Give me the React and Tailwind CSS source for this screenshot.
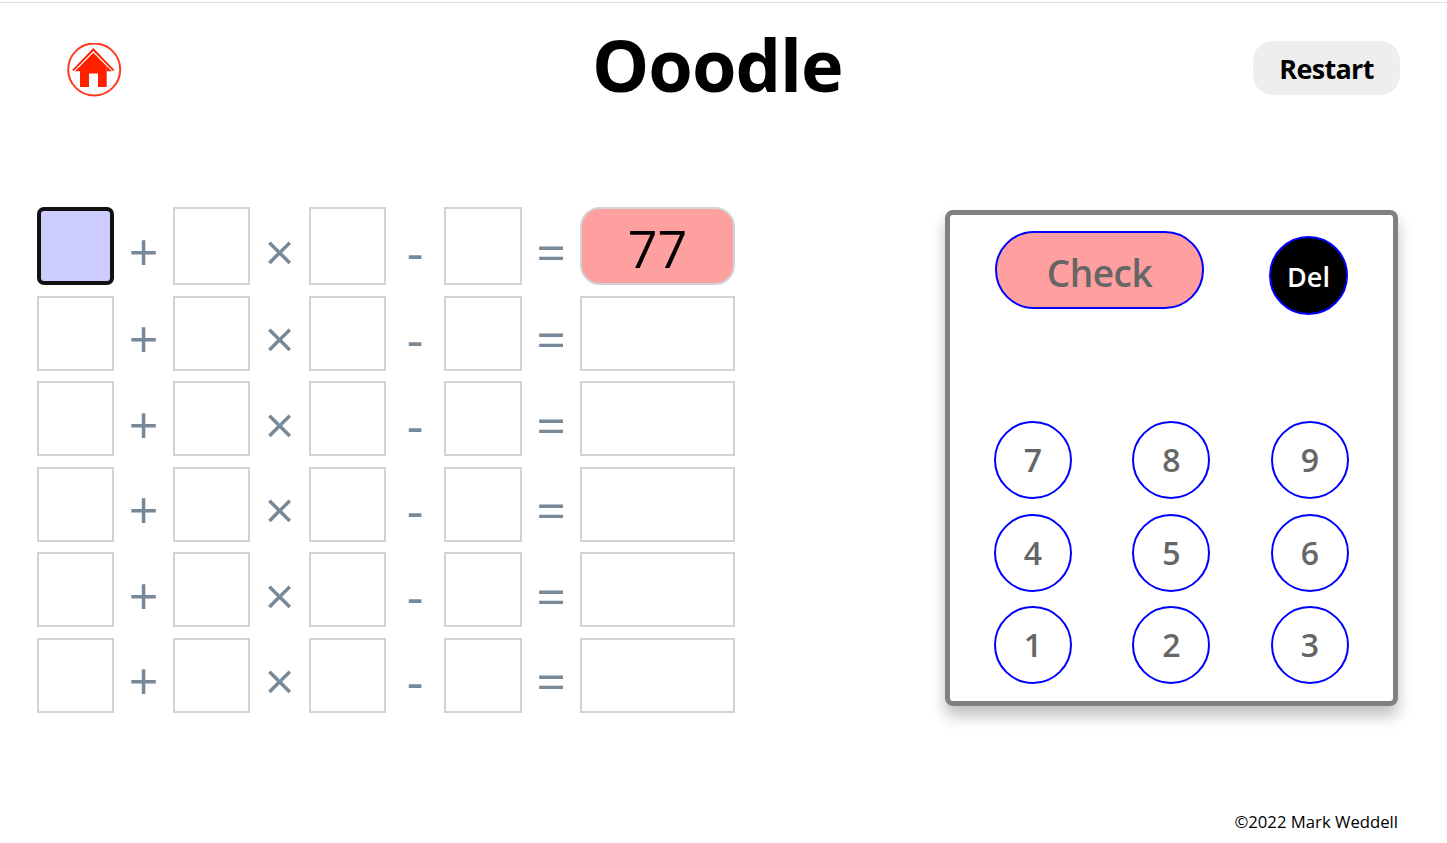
const rows = [0, 1, 2, 3, 4, 5];

const Cell = ({ active }) => (
  <div className={active ? 'border-4 border-[#111] rounded-[7px] bg-[#ccccff]' : 'border-2 border-[#d3d3d3]'} />
);

const Op = ({ children }) => (
  <div className="flex items-center justify-center pt-[10px] text-[52px] font-medium leading-none text-[#778899]">{children}</div>
);

const HomeIcon = () => (
  <svg width="55" height="55" viewBox="0 0 55 55" className="mt-[5px] shrink-0">
    <circle cx="27.2" cy="26.5" r="26" fill="none" stroke="#ff3b1f" strokeWidth="2" />
    <path d="M26.3 5 L47.5 27 L46 28 L26.3 8 L6.7 28 L5.2 27 Z" fill="#ff2000" />
    <path d="M26.3 9.7 L13 23.2 V44 H22 V30.5 H31 V44 H39.7 V23.2 Z" fill="#ff2000" />
    <path d="M13 23.2 L7.8 28.2 H13 Z M39.7 23.2 L45 28.2 H39.7 Z" fill="#ff2000" />
  </svg>
);

const NumKey = ({ n }) => (
  <button className="flex h-[78px] w-[78px] items-center justify-center rounded-full border-2 border-[#0000ff] text-[32px] font-semibold text-[#666]">
    {n}
  </button>
);

export default function App() {
  return (
    <div className="h-[843px] overflow-hidden bg-white font-['Open_Sans',sans-serif] text-black">
      <div className="mt-[2px] border-t border-[#ddd]" />

      <header className="flex h-[130px] items-center">
        <div className="ml-[67px]"><HomeIcon /></div>
        <h1 className="-mt-[8px] ml-[470px] text-[72px] font-bold leading-none tracking-[-1px]">Ooodle</h1>
        <button className="ml-auto mr-[47px] h-[54px] w-[147px] rounded-[20px] bg-[#eee] pt-[2px] text-[27px] font-bold tracking-[-0.7px]">Restart</button>
      </header>

      <main className="mt-[74px] flex items-start pl-[37px]">
        <div className="grid grid-cols-[77px_59px_77px_59px_77px_58px_78px_58px_155px] grid-rows-[78px_75px_75px_75px_75px_75px] gap-y-[10.5px]">
          {rows.map((r) => (
            <div key={r} className="contents">
              <Cell active={r === 0} />
              <Op>+</Op>
              <Cell />
              <Op>×</Op>
              <Cell />
              <Op>-</Op>
              <Cell />
              <Op>=</Op>
              {r === 0 ? (
                <div className="flex items-center justify-center rounded-[20px] border-2 border-[#d3d3d3] bg-[#ffa0a0] pt-[4px] text-[52px] leading-none">77</div>
              ) : (
                <div className="border-2 border-[#d3d3d3]" />
              )}
            </div>
          ))}
        </div>

        <section className="ml-auto mr-[49px] mt-[3px] h-[496px] w-[453px] rounded-[8px] border-[5px] border-[#808080] bg-white pl-[44px] pt-[16px] shadow-[0_10px_15px_rgba(0,0,0,0.25)]">
          <div className="flex items-start">
            <button className="ml-[1px] h-[78px] w-[209px] rounded-[39px] border-2 border-[#0000ff] bg-[#ff9f9f] pt-[5px] text-[37px] font-semibold tracking-[-0.5px] text-[#666]">Check</button>
            <button className="ml-[65px] mt-[5px] flex h-[79px] w-[79px] items-center justify-center rounded-full border-2 border-[#0000ff] bg-black pt-[3px] text-[27px] font-semibold text-white">Del</button>
          </div>
          <div className="mt-[106px] grid w-[355px] grid-cols-3 justify-between gap-y-[14.5px]">
            {[7, 8, 9, 4, 5, 6, 1, 2, 3].map((n) => (
              <div key={n} className="flex justify-center [&:nth-child(3n+1)]:justify-start [&:nth-child(3n)]:justify-end">
                <NumKey n={n} />
              </div>
            ))}
          </div>
        </section>
      </main>

      <footer className="mt-[98px] pr-[49px] text-right text-[16.7px] leading-[22px]">©2022 Mark Weddell</footer>
    </div>
  );
}
